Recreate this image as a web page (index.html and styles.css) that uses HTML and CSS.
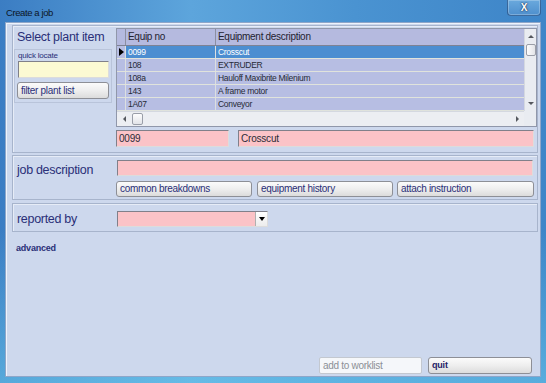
FILE: index.html
```html
<!DOCTYPE html>
<html>
<head>
<meta charset="utf-8">
<title>Create a job</title>
<link rel="stylesheet" href="styles.css">
</head>
<body>
<div class="window">
  <div class="titlebar">
    <span class="title">Create a job</span>
    <span class="close">X</span>
  </div>
  <div class="client">
    <div class="panel p1">
      <div class="p1-top">
        <div class="leftcol">
          <div class="heading">Select plant item</div>
          <div class="qbox">
            <div class="small">quick locate</div>
            <div class="field yellow"></div>
            <div class="btn filter">filter plant list</div>
          </div>
        </div>
        <div class="grid">
          <div class="gmain">
            <div class="grow head">
              <div class="sel"></div>
              <div class="c1">Equip no</div>
              <div class="c2">Equipment description</div>
            </div>
            <div class="grow current">
              <div class="sel"><span class="ptr"></span></div>
              <div class="c1">0099</div>
              <div class="c2">Crosscut</div>
            </div>
            <div class="grow">
              <div class="sel"></div>
              <div class="c1">108</div>
              <div class="c2">EXTRUDER</div>
            </div>
            <div class="grow">
              <div class="sel"></div>
              <div class="c1">108a</div>
              <div class="c2">Hauloff Maxibrite Milenium</div>
            </div>
            <div class="grow">
              <div class="sel"></div>
              <div class="c1">143</div>
              <div class="c2">A frame motor</div>
            </div>
            <div class="grow">
              <div class="sel"></div>
              <div class="c1">1A07</div>
              <div class="c2">Conveyor</div>
            </div>
          </div>
          <div class="vscroll">
            <div class="arr"><span class="tri up"></span></div>
            <div class="thumb vthumb"></div>
            <div class="track"></div>
            <div class="arr"><span class="tri down"></span></div>
          </div>
          <div class="hscroll">
            <div class="harr"><span class="tri left"></span></div>
            <div class="thumb hthumb"></div>
            <div class="track"></div>
            <div class="harr"><span class="tri right"></span></div>
          </div>
          <div class="corner"></div>
        </div>
      </div>
      <div class="fields">
        <div class="field pink f1">0099</div>
        <div class="field pink f2">Crosscut</div>
      </div>
    </div>

    <div class="panel p2">
      <div class="label">job description</div>
      <div class="rcol">
        <div class="field pink jobdesc"></div>
        <div class="btnrow">
          <div class="btn b1">common breakdowns</div>
          <div class="btn b2">equipment history</div>
          <div class="btn b3">attach instruction</div>
        </div>
      </div>
    </div>

    <div class="panel p3">
      <div class="label">reported by</div>
      <div class="combo">
        <div class="dd"><span class="tri down black"></span></div>
      </div>
    </div>

    <div class="advanced">advanced</div>

    <div class="bottom">
      <div class="btn disabled">add to worklist</div>
      <div class="btn quit">quit</div>
    </div>
  </div>
</div>
</body>
</html>
```

FILE: styles.css
```css
* { box-sizing: border-box; }
html, body { margin: 0; padding: 0; }
body {
  width: 546px;
  height: 383px;
  overflow: hidden;
  font-family: "Liberation Sans", Arial, sans-serif;
  color: #2a2f78;
}
.window {
  width: 546px;
  height: 383px;
  display: flex;
  flex-direction: column;
  padding: 0 5px 6px 5px;
  background:
    linear-gradient(180deg, rgba(0,0,0,0) 60%, rgba(110,205,238,0.55) 100%),
    linear-gradient(90deg, #3b7dc3 0%, #5da5dc 35%, #4a93d1 65%, #3e85c8 100%);
}
.titlebar {
  height: 22px;
  flex: none;
  display: flex;
  align-items: flex-start;
  padding-left: 1px;
}
.title {
  padding-top: 6px;
  font-size: 9.5px;
  letter-spacing: -0.4px;
  line-height: 13px;
  color: #0c1626;
}
.close {
  margin-left: auto;
  width: 34px;
  height: 16px;
  border: 1px solid rgba(25, 55, 105, 0.55);
  border-top: 0;
  border-radius: 0 0 4px 4px;
  background: linear-gradient(180deg, #6aa9dd, #4e8fcd);
  box-shadow: inset 0 0 0 1px rgba(255,255,255,0.25);
  color: #fff;
  font-weight: bold;
  font-size: 10px;
  line-height: 15px;
  text-align: center;
  text-shadow: 0 0 2px #1a2c50, 0 0 1px #1a2c50;
}
.client {
  height: 355px;
  flex: none;
  background: #cdd8ed;
  border: 1px solid #8ea6c9;
  box-shadow: inset 1px 1px 0 #eef3fb;
  display: flex;
  flex-direction: column;
}
.panel {
  margin: 2px 2px 0 6px;
  border: 1px solid #a7b4cc;
  box-shadow: inset 1px 1px 0 #e6ecf7;
}
/* panel 1 */
.p1-top { display: flex; }
.leftcol { width: 103px; flex: none; }
.heading {
  margin-top: 4px;
  padding-left: 4px;
  font-size: 12.5px;
  letter-spacing: -0.3px;
  line-height: 15px;
  white-space: nowrap;
}
.qbox {
  margin: 4px 0 0 1px;
  width: 98px;
  border: 1px solid #b9c4da;
  padding: 0 3px 3px 3px;
}
.small {
  font-size: 8px;
  letter-spacing: -0.2px;
  line-height: 11px;
}
.field {
  height: 17px;
  border: 1px solid;
  border-color: #80808a #dcdcdc #dcdcdc #80808a;
  font-size: 10px;
  letter-spacing: -0.2px;
  line-height: 15px;
  padding-left: 2px;
  color: #2c2c38;
}
.yellow { background: #fcfad3; width: 91px; }
.pink { background: #fbc3c7; }
.btn {
  height: 17px;
  border: 1px solid #8d8f96;
  border-radius: 3px;
  background: linear-gradient(180deg, #fbfbfb 0%, #eeeeee 50%, #dcdcdc 100%);
  font-size: 10px;
  letter-spacing: -0.3px;
  line-height: 15px;
  padding-left: 3px;
  color: #2a2f78;
  white-space: nowrap;
}
.filter { margin: 4px 0 0 -1px; width: 92px; }

.grid {
  flex: 1;
  margin-top: 2px;
  height: 99px;
  border: 1px solid #9097aa;
  display: grid;
  grid-template-columns: 1fr 12px;
  grid-template-rows: 82px 15px;
  background: #e9ecf1;
}
.gmain { background: #b7bee3; }
.grow {
  display: flex;
  height: 13px;
  border-bottom: 1px solid #e0e3dc;
  font-size: 8.5px;
  letter-spacing: -0.3px;
  line-height: 12px;
  color: #262a36;
}
.grow.head {
  height: 17px;
  background: #b5badf;
  border-bottom: 1px solid #7e8294;
  font-size: 10px;
  letter-spacing: -0.3px;
  line-height: 16px;
  color: #1f2230;
}
.sel {
  width: 9px;
  flex: none;
  border-right: 1px solid #dcdfe0;
  position: relative;
}
.c1 {
  width: 90px;
  flex: none;
  padding-left: 2px;
  border-right: 1px solid #dcdfe0;
}
.c2 { flex: 1; padding-left: 2px; }
.head .sel, .head .c1 { border-right-color: #8b8fa2; }
.current .c1, .current .c2 { background: #4c8ed1; color: #fff; }
.ptr {
  position: absolute;
  left: 2px;
  top: 2px;
  width: 0; height: 0;
  border-left: 5px solid #000;
  border-top: 4px solid transparent;
  border-bottom: 4px solid transparent;
}
.vscroll {
  display: flex;
  flex-direction: column;
  background: #e9ecf1;
  border-left: 1px solid #d4d8e0;
}
.arr { height: 15px; display: flex; align-items: center; justify-content: center; }
.track { flex: 1; }
.thumb {
  border: 1px solid #9a9ea8;
  border-radius: 2px;
  background: linear-gradient(90deg, #fdfdfd, #e2e4e8);
}
.vthumb { height: 12px; margin: 0 0 0 1px; }
.hscroll {
  display: flex;
  align-items: center;
  background: #eceef2;
  border-top: 1px solid #d4d8e0;
}
.harr { width: 14px; height: 13px; display: flex; align-items: center; justify-content: center; }
.hthumb { width: 11px; height: 12px; margin-left: 1px; background: linear-gradient(180deg, #fdfdfd, #e2e4e8); }
.corner { background: #e9ecf1; }
.tri { width: 0; height: 0; display: block; }
.tri.up { border-bottom: 3px solid #55585e; border-left: 3px solid transparent; border-right: 3px solid transparent; }
.tri.down { border-top: 3px solid #55585e; border-left: 3px solid transparent; border-right: 3px solid transparent; }
.tri.left { border-right: 3px solid #55585e; border-top: 3px solid transparent; border-bottom: 3px solid transparent; }
.tri.right { border-left: 3px solid #55585e; border-top: 3px solid transparent; border-bottom: 3px solid transparent; }
.tri.black { border-top-color: #000; border-top-width: 4px; border-left-width: 3.5px; border-right-width: 3.5px; }

.fields {
  display: flex;
  gap: 9px;
  margin-top: 3px;
  padding: 0 0 5px 103px;
}
.f1 { width: 113px; }
.f2 { width: 296px; }

/* panel 2 */
.p2 { display: flex; padding: 4px 0 2px 0; }
.label {
  width: 104px;
  flex: none;
  padding-left: 4px;
  font-size: 12.5px;
  letter-spacing: -0.3px;
  line-height: 16px;
  margin-top: 2px;
  white-space: nowrap;
}
.rcol { display: flex; flex-direction: column; }
.jobdesc { width: 416px; height: 16px; margin-left: 1px; }
.btnrow { display: flex; margin-top: 5px; }
.btnrow .btn { height: 16px; line-height: 14px; }
.b1 { width: 136px; margin-right: 5px; }
.b2 { width: 136px; margin-right: 4px; }
.b3 { width: 137px; }
.p2 .rcol { margin-left: -1px; }

/* panel 3 */
.p3 { display: flex; padding: 7px 0 4px 0; margin-top: 3px; }
.p3 .label { margin-top: 0; }
.combo {
  width: 151px;
  height: 16px;
  background: #fbc3c7;
  border: 1px solid;
  border-color: #80808a #dcdcdc #dcdcdc #80808a;
  display: flex;
  justify-content: flex-end;
}
.dd {
  width: 12px;
  height: 14px;
  background: linear-gradient(180deg, #ffffff, #ececec);
  border-left: 1px solid #b0b0b0;
  display: flex;
  align-items: center;
  justify-content: center;
}
.advanced {
  margin: 11px 0 0 10px;
  font-size: 9px;
  letter-spacing: -0.2px;
  font-weight: bold;
  line-height: 11px;
}
.bottom {
  margin-top: auto;
  margin-bottom: 2px;
  display: flex;
  justify-content: flex-end;
  gap: 6px;
  padding-right: 8px;
}
.bottom .btn { height: 17px; }
.disabled {
  width: 103px;
  background: #f5f7fa;
  border-color: #c3c8d0;
  border-radius: 2px;
  color: #8c8f96;
}
.quit {
  width: 104px;
  font-weight: bold;
  font-size: 9px;
  letter-spacing: -0.2px;
  color: #1e2266;
}
```
